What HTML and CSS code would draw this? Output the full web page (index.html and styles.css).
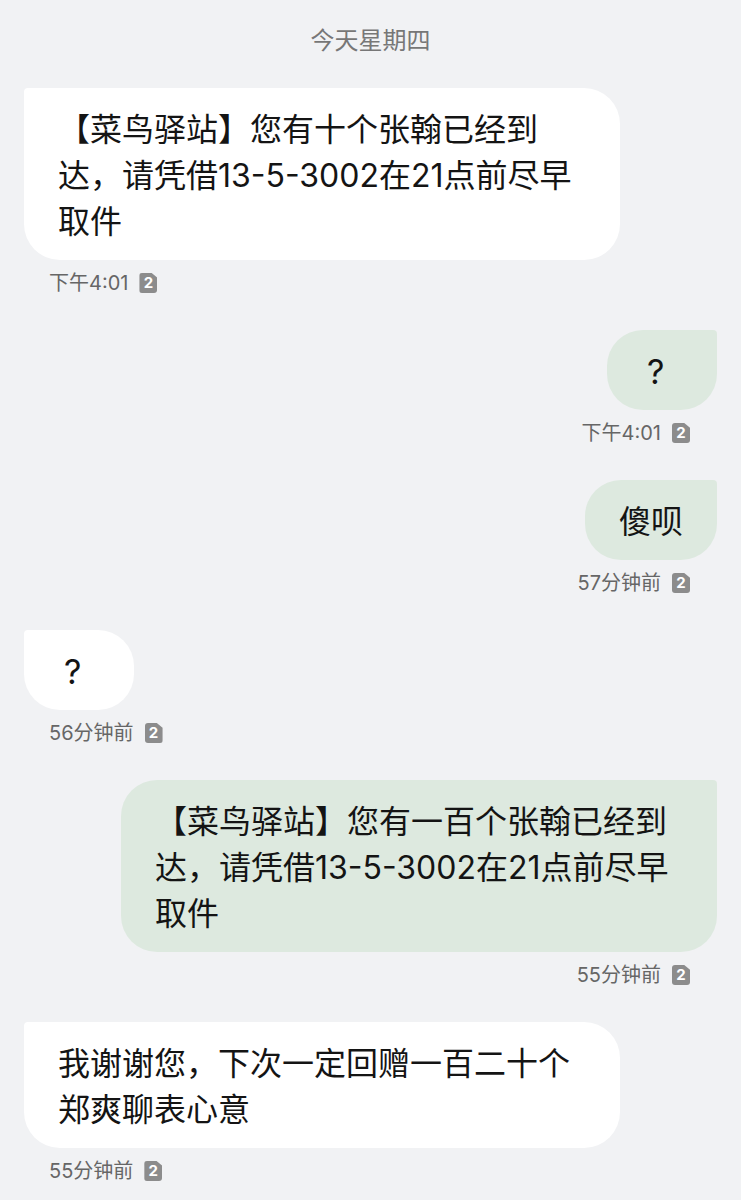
FILE: index.html
```html
<!DOCTYPE html>
<html lang="zh-CN">
<head>
    <meta charset="UTF-8">
    <meta name="viewport" content="width=device-width, initial-scale=1.0">
    <title>短信</title>
    <link rel="stylesheet" href="styles.css">
</head>
<body>
    <div class="day-label">今天星期四</div>

    <div class="thread">
        <div class="msg in">
            <div class="bubble">【菜鸟驿站】您有十个张翰已经到达，请凭借13-5-3002在21点前尽早取件</div>
            <div class="meta">下午4:01 <span class="sim">2</span></div>
        </div>

        <div class="msg out">
            <div class="bubble short">?</div>
            <div class="meta">下午4:01 <span class="sim">2</span></div>
        </div>

        <div class="msg out">
            <div class="bubble">傻呗</div>
            <div class="meta">57分钟前 <span class="sim">2</span></div>
        </div>

        <div class="msg in">
            <div class="bubble short">?</div>
            <div class="meta">56分钟前 <span class="sim">2</span></div>
        </div>

        <div class="msg out">
            <div class="bubble">【菜鸟驿站】您有一百个张翰已经到达，请凭借13-5-3002在21点前尽早取件</div>
            <div class="meta">55分钟前 <span class="sim">2</span></div>
        </div>

        <div class="msg in">
            <div class="bubble">我谢谢您，下次一定回赠一百二十个郑爽聊表心意</div>
            <div class="meta">55分钟前 <span class="sim">2</span></div>
        </div>
    </div>
</body>
</html>
```

FILE: styles.css
```css
body {
    margin: 0;
    padding: 0;
    background-color: #f1f2f4;
    font-family: Inter, "Noto Sans CJK SC", sans-serif;
    color: #141414;
}

.day-label {
    text-align: center;
    font-size: 24px;
    line-height: 30px;
    color: #777;
    padding-top: 26px;
    margin-bottom: 32px;
}

.thread {
    display: flex;
    flex-direction: column;
}

.msg {
    display: flex;
    flex-direction: column;
    margin-bottom: 35px;
}

.msg.in {
    align-items: flex-start;
    padding-left: 24px;
}

.msg.out {
    align-items: flex-end;
    padding-right: 24px;
}

.bubble {
    box-sizing: border-box;
    max-width: 596px;
    padding: 19px 34px 15px;
    font-size: 32px;
    line-height: 46px;
    border-radius: 36px;
}

.bubble.short {
    min-width: 110px;
    padding-left: 40px;
    font-size: 34px;
}

.msg.in .bubble {
    background-color: #ffffff;
    border-top-left-radius: 4px;
}

.msg.out .bubble {
    background-color: #dde9df;
    border-top-right-radius: 4px;
}

.meta {
    display: flex;
    align-items: center;
    gap: 11px;
    margin-top: 11px;
    font-size: 20px;
    line-height: 24px;
    color: #666;
}

.msg.in .meta {
    padding-left: 25px;
}

.msg.out .meta {
    padding-right: 27px;
}

.sim {
    display: inline-flex;
    justify-content: center;
    align-items: center;
    width: 18px;
    height: 20px;
    background-color: #8c8c8c;
    color: #fff;
    font-size: 15px;
    font-weight: 700;
    border-radius: 3px;
    clip-path: polygon(0 0, 68% 0, 100% 24%, 100% 100%, 0 100%);
}
```
